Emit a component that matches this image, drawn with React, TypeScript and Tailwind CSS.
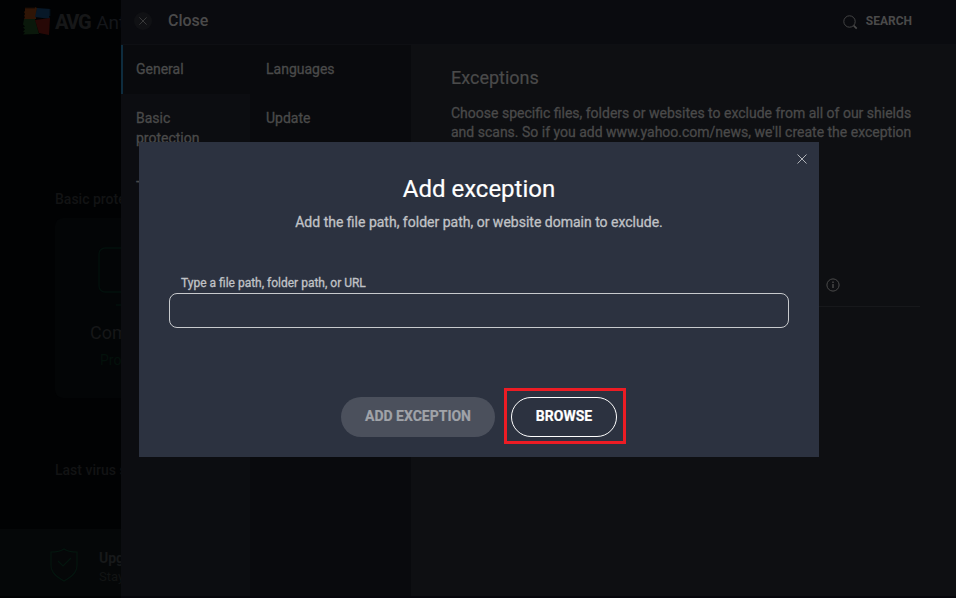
import React from "react";

function Cross({ className }: { className: string }) {
  return (
    <svg viewBox="0 0 10 10" className={className} fill="none" stroke="currentColor" strokeWidth="0.9">
      <path d="M0.5 0.5 9.5 9.5M9.5 0.5 0.5 9.5" />
    </svg>
  );
}

function Logo() {
  return (
    <svg viewBox="0 0 30 30" className="h-[30px] w-[30px] shrink-0">
      <path d="M3 1l1 2 1-2 1 2 1-2 1 2 1-2 1 2 1-2 1 2 1-2 2 1-1 11H2l1-2-1-1 1-2-1-2 1-1z" fill="#2f1506" />
      <path d="M15 2l14 1-2 1 2 1-2 1 2 1-2 1 2 1-2 1 1 3-15-2z" fill="#071828" />
      <path d="M2 13h11l4 15-16 .5 2-2-2-1 2-2-2-2 2-1-2-2z" fill="#0a180b" />
      <path d="M13 14l15-2-1 17-10-2z" fill="#270806" />
    </svg>
  );
}

function Dashboard() {
  return (
    <div className="flex h-[598px] w-[121px] shrink-0 flex-col overflow-hidden whitespace-nowrap bg-[#010203]">
      <div className="flex h-[42px] items-center pl-[22px]">
        <Logo />
        <span className="mt-[2px] ml-[3px] w-[37px] text-[20px] leading-6 font-extrabold tracking-[-1.4px] text-[#161718]">AVG</span>
        <span className="mt-[3px] ml-[6px] text-[19px] leading-6 text-[#14161a]">Ant</span>
      </div>
      <div className="mt-[148px] ml-[55px] text-[14px] leading-[18px] font-medium text-[#121314]">Basic prote</div>
      <div className="mt-[10px] ml-[55px] h-[180px] w-[180px] rounded-lg bg-[#030506]">
        <div className="flex flex-col pt-[29px]">
          <svg viewBox="0 0 62 60" className="ml-[43px] h-[60px] w-[62px]" fill="none" stroke="#03100c" strokeWidth="1.4">
            <rect x="1" y="1" width="60" height="44" rx="6" />
            <path d="M18 58h26M24 46v12" />
          </svg>
          <div className="mt-[14px] pl-[35px] text-[18px] leading-6 text-[#161718]">Com</div>
          <div className="mt-[6px] pl-[45px] text-[14px] leading-[18px] text-[#03110b]">Pro</div>
        </div>
      </div>
      <div className="mt-[63px] ml-[55px] text-[14px] leading-[18px] font-medium text-[#121314]">Last virus s</div>
      <div className="mt-auto mb-[2px] flex h-[67px] items-start bg-[#050708] pt-[19px] pl-[50px]">
        <svg viewBox="0 0 28 34" className="h-[34px] w-7 shrink-0" fill="none" stroke="#04160f" strokeWidth="1.1">
          <path d="M14 1C10 4 6 4 1 4v13c0 8 6 12 13 16 7-4 13-8 13-16V4C22 4 18 4 14 1Z" />
          <path d="M8 13l5 5 8-8" />
        </svg>
        <div className="ml-[21px]">
          <div className="text-[14px] leading-5 font-bold text-[#17191a]">Upg</div>
          <div className="text-[13px] leading-[18px] text-[#121414]">Stay</div>
        </div>
      </div>
    </div>
  );
}

function Settings() {
  return (
    <div className="flex h-[598px] w-[835px] flex-col border-b-2 border-[#06060b] bg-[#0e0f12] text-[#4a4a4a]">
      <header className="flex h-[45px] shrink-0 items-start border-b border-[#0e0f13] bg-[#0a0b0f]">
        <div className="mt-3 ml-[13px] flex h-[18px] w-[18px] items-center justify-center rounded-full bg-[#101114]">
          <Cross className="h-2 w-2" />
        </div>
        <div className="mt-[10px] ml-4 text-[16px] leading-[22px] font-medium">Close</div>
        <svg viewBox="0 0 15 15" className="mt-[15px] ml-auto h-[15px] w-[15px]" fill="none" stroke="currentColor">
          <circle cx="6.5" cy="6.5" r="5.7" strokeWidth="0.9" />
          <path d="m10.7 10.7 3 3" strokeWidth="1.7" />
        </svg>
        <div className="mt-[11px] mr-[44px] ml-[8px] text-[12px] leading-5 font-bold">SEARCH</div>
      </header>
      <div className="flex min-h-0 flex-1">
        <nav className="flex w-[129px] flex-col bg-[#0c0d11] text-[14px] leading-5 [-webkit-text-stroke:0.3px]">
          <div className="flex h-[49px] items-center border-l-2 border-[#0e2c3e] bg-[#090a0d] pb-[2px] pl-[13px]">General</div>
          <div className="h-[69px] pt-[14px] pl-[15px] leading-5">Basic<br />protection</div>
          <div className="pt-[14px] pl-[15px]">T</div>
        </nav>
        <nav className="flex w-[161px] flex-col bg-[#090a0d] text-[14px] leading-5 [-webkit-text-stroke:0.3px]">
          <div className="flex h-[49px] items-center pb-[2px] pl-[16px]">Languages</div>
          <div className="flex h-[49px] items-center pb-[2px] pl-[16px]">Update</div>
        </nav>
        <main className="flex flex-1 flex-col pl-[40px]">
          <h1 className="mt-[21px] text-[18px] leading-6 [-webkit-text-stroke:0.2px]">Exceptions</h1>
          <p className="mt-[14px] text-[14px] leading-[19px] whitespace-nowrap [-webkit-text-stroke:0.3px]">
            Choose specific files, folders or websites to exclude from all of our shields<br />
            and scans. So if you add www.yahoo.com/news, we'll create the exception
          </p>
          <div className="mt-[136px] mr-[36px] flex h-[29px] border-b border-[#17181b] pl-[375px]">
            <svg viewBox="0 0 14 14" className="h-[14px] w-[14px]" fill="none" stroke="currentColor">
              <circle cx="7" cy="7" r="6.1" strokeWidth="1" />
              <path d="M7 6v4M7 3.5v1.4" strokeWidth="1.4" />
            </svg>
          </div>
        </main>
      </div>
    </div>
  );
}

function ExceptionDialog() {
  return (
    <div className="absolute top-[142px] left-[139px] flex h-[315px] w-[680px] flex-col bg-[#2c3240]">
      <button className="mt-[12px] mr-[12px] flex h-[10px] w-[10px] self-end text-[#c0c2c6]">
        <Cross className="h-[10px] w-[10px]" />
      </button>
      <h2 className="mt-[9px] text-center text-[24px] leading-8 text-white [-webkit-text-stroke:0.2px]">Add exception</h2>
      <p className="mt-[7px] text-center text-[14px] leading-5 text-[#c0c2c6] [-webkit-text-stroke:0.3px]">
        Add the file path, folder path, or website domain to exclude.
      </p>
      <label className="mt-[42px] ml-[42px] text-[12px] leading-[18px] text-[#c0c2c6] [-webkit-text-stroke:0.3px]">Type a file path, folder path, or URL</label>
      <input aria-label="Path or URL" className="mt-px ml-[30px] h-[35px] w-[620px] rounded-lg border border-[#c8cacd] bg-transparent px-3 outline-none" />
      <div className="mt-[60px] flex items-center pl-[202px]">
        <button className="mt-[2px] h-10 w-[154px] rounded-full bg-[#4b505c] pb-[2px] text-[14px] font-bold text-[#a0a3a9] [-webkit-text-stroke:0.2px]">ADD EXCEPTION</button>
        <div className="ml-[9px] flex h-[56px] w-[122px] items-center border-3 border-[#ed1c24] pl-[4px]">
          <button className="mt-[2px] h-10 w-[106px] rounded-full border border-white pb-[2px] text-[14px] font-bold text-white [-webkit-text-stroke:0.2px]">BROWSE</button>
        </div>
      </div>
    </div>
  );
}

export default function App() {
  return (
    <div className="relative flex h-[598px] w-[956px] overflow-hidden bg-black font-[Roboto,sans-serif]">
      <Dashboard />
      <Settings />
      <ExceptionDialog />
    </div>
  );
}
